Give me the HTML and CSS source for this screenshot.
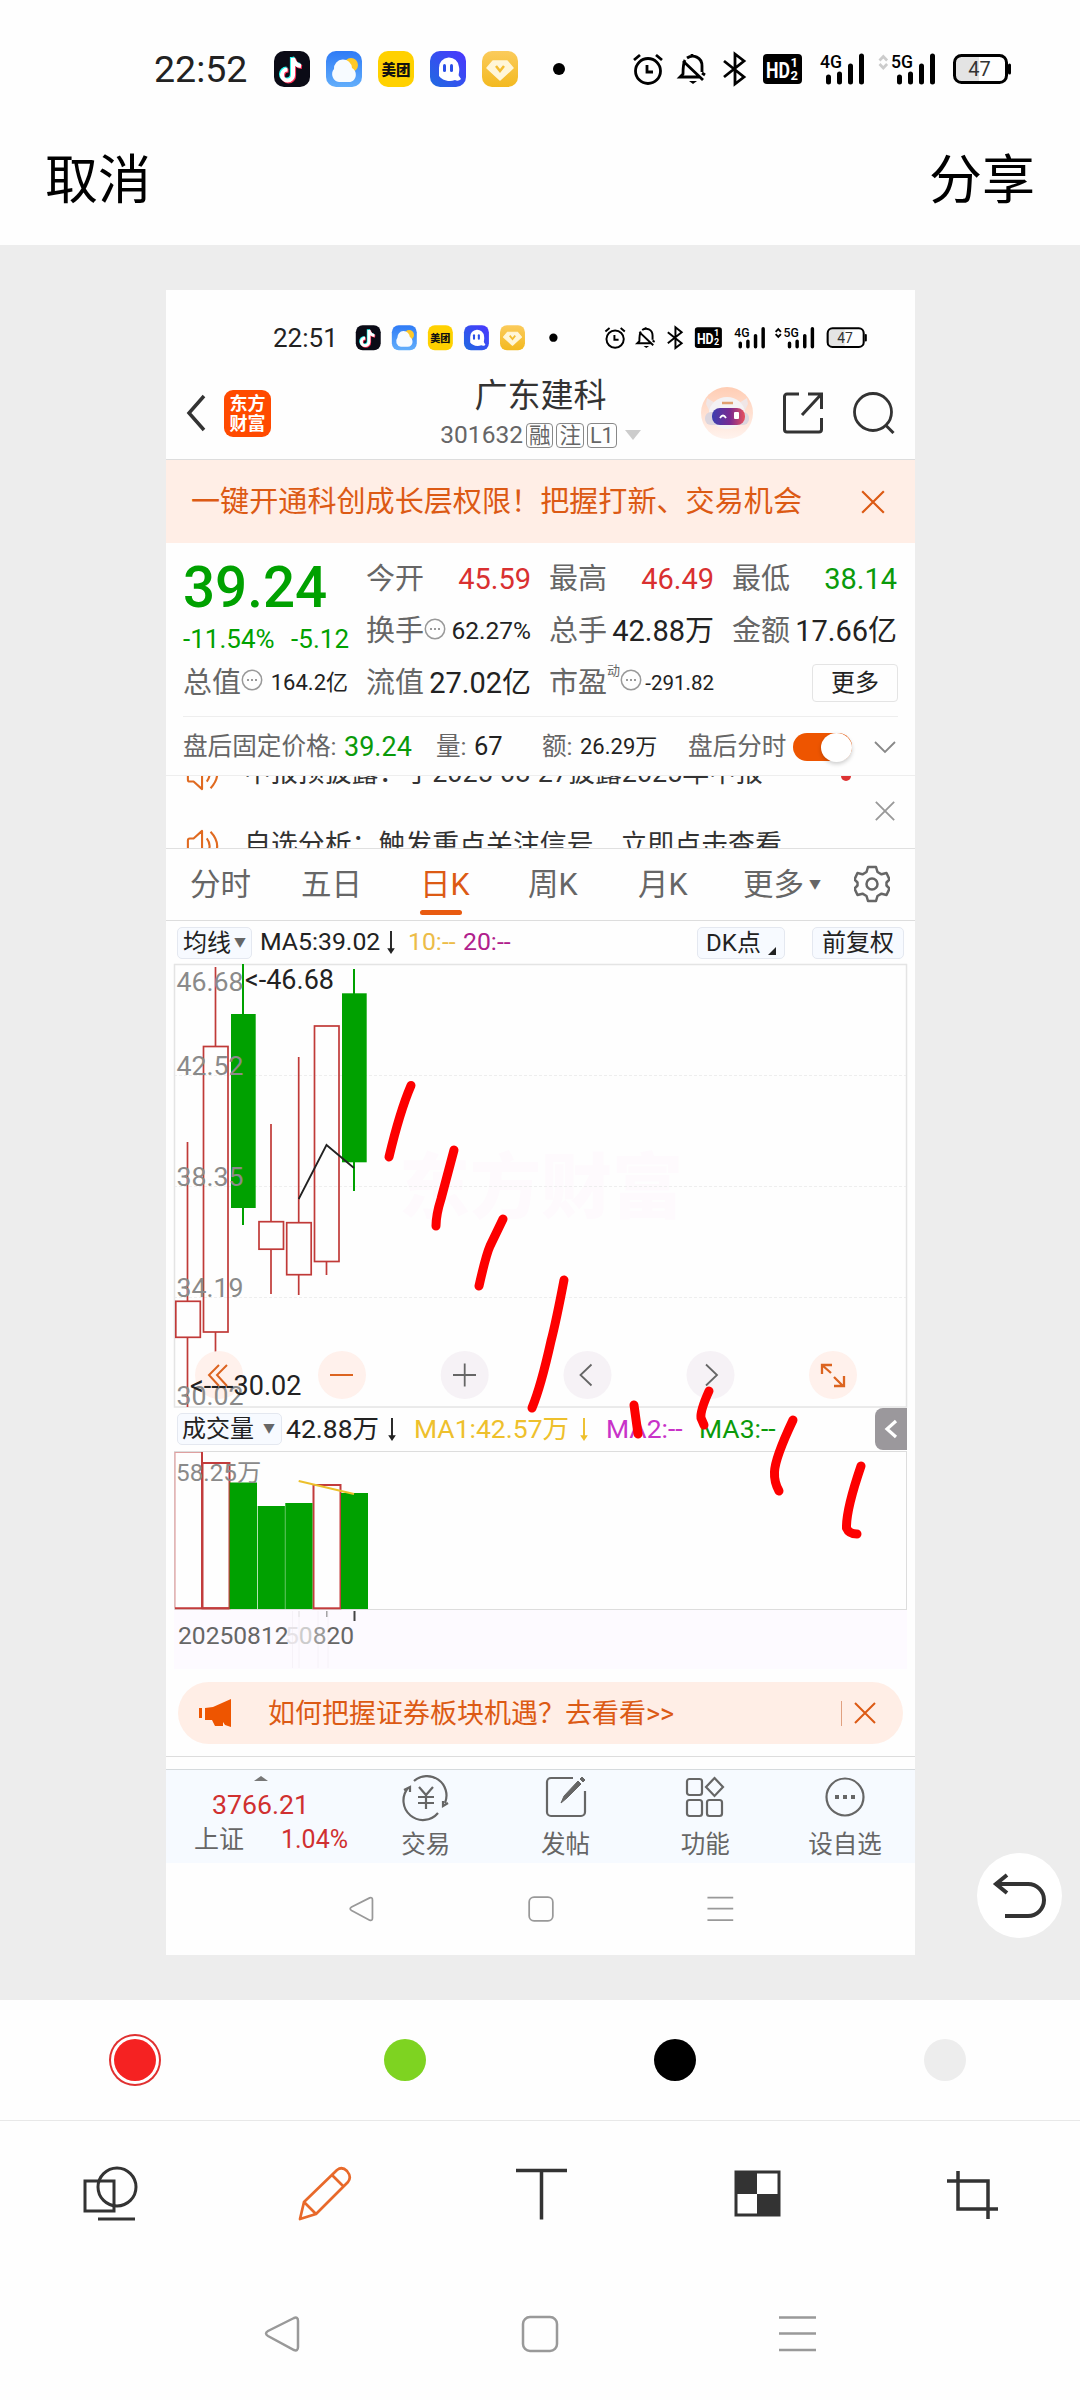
FILE: index.html
```html
<!DOCTYPE html>
<html lang="zh-CN">
<head>
    <meta charset="UTF-8">
    <meta name="viewport" content="width=device-width, initial-scale=1.0">
    <title>编辑截图</title>
    <link rel="stylesheet" href="styles.css">
</head>
<body>
    <!-- shared icons -->
    <svg class="defs">
        <defs>
            <linearGradient id="sky" x1="0" y1="0" x2="0" y2="1"><stop offset="0" stop-color="#2f7bf6"/><stop offset="1" stop-color="#62aefb"/></linearGradient>
            <linearGradient id="blue" x1="0" y1="1" x2="1" y2="0"><stop offset="0" stop-color="#1f6be0"/><stop offset="1" stop-color="#4b35ff"/></linearGradient>
            <linearGradient id="gold" x1="0" y1="0" x2="0" y2="1"><stop offset="0" stop-color="#fbcb5c"/><stop offset="1" stop-color="#f3b91f"/></linearGradient>
            <linearGradient id="visor"><stop offset="0" stop-color="#3b3fb0"/><stop offset=".55" stop-color="#7a2a90"/><stop offset="1" stop-color="#e8505c"/></linearGradient>
            <linearGradient id="peach" x1="0" y1="0" x2="0" y2="1"><stop offset="0" stop-color="#ffcdb4"/><stop offset="1" stop-color="#fff3ee"/></linearGradient>
        </defs>
        <symbol id="status-icons" viewBox="270 45 760 46">
            <rect x="274" y="51" width="36" height="36" rx="10" fill="#0b0b16"/>
            <g fill="none" stroke-width="4.2">
                <path d="M292 57v17a5.5 5.5 0 1 1-5.5-5.5M292 57c1 5 4 7.500 8 8" stroke="#25f4ee"/>
                <path d="M294 59v17a5.500 5.500 0 1 1-5.500-5.500M294 59c1 5 4 7.500 8 8" stroke="#fe2c55"/>
                <path d="M293 58v17a5.500 5.500 0 1 1-5.500-5.500M293 58c1 5 4 7.500 8 8" stroke="#fff"/>
            </g>
            <rect x="326" y="51" width="36" height="36" rx="10" fill="url(#sky)"/>
            <circle cx="351" cy="65" r="7" fill="#ffc928"/>
            <path d="M339 82a8 8 0 0 1-5-13 9 9 0 0 1 18-1c6 3 5 14-3 14z" fill="#f7fbff"/>
            <rect x="378" y="51" width="36" height="36" rx="10" fill="#ffd100"/>
            <text x="396" y="74.500" font-size="14.500" font-weight="900" text-anchor="middle" fill="#111">美团</text>
            <rect x="430" y="51" width="36" height="36" rx="10" fill="url(#blue)"/>
            <path d="M439 68a10 10 0 0 1 20-1c1 4-1 8 0 9l2 3c-2 2-4 2-6 1-7 3-14-1-16-4z" fill="#fff"/>
            <rect x="443" y="64" width="3" height="8" rx="1.500" fill="#2a50e8"/><rect x="450" y="64" width="3" height="8" rx="1.500" fill="#2a50e8"/>
            <rect x="482" y="51" width="36" height="36" rx="10" fill="url(#gold)"/>
            <path d="M493 61h14l6 7-13 12-13-12z" fill="#fff6d8" stroke="#fff6d8" stroke-width="1.500" stroke-linejoin="round"/>
            <path d="M496 66l4 5 4-5" fill="none" stroke="#f4bd30" stroke-width="2.500"/>
            <circle cx="559" cy="69" r="6"/>
            <g fill="none" stroke="#000" stroke-width="2.800">
                <circle cx="648" cy="71" r="12.500"/>
                <path d="M647 65v7h6M634 60l6-5M662 60l-6-5"/>
                <path d="M685 60c-2 4-2 9-2 14l-3 3h20M687 58c6-4 15-1 15 8v6M692 57v-3M683 61l20 19M702 73l3 2"/>
                <path d="M724 61l20 16-9 7V54l9 7-20 16"/>
            </g>
            <path d="M689 81h8l-4 3z"/>
            <rect x="763" y="54" width="39" height="30" rx="4"/>
            <text x="766" y="77.500" font-size="22" font-weight="700" fill="#fff" textLength="24" lengthAdjust="spacingAndGlyphs">HD</text>
            <text x="790.500" y="67" font-size="13" font-weight="700" fill="#fff">1</text>
            <text x="790.500" y="79.500" font-size="13" font-weight="700" fill="#fff">2</text>
            <text x="820" y="68" font-size="18" font-weight="500" textLength="22" lengthAdjust="spacingAndGlyphs">4G</text>
            <text x="891" y="68" font-size="18" font-weight="500" textLength="22" lengthAdjust="spacingAndGlyphs">5G</text>
            <path d="M828.500 77v5M839.500 74v8M850.500 66v16M861.500 56v26M899.500 77v5M910.500 74v8M921.500 66v16M932.500 56v26" stroke="#000" stroke-width="5" stroke-linecap="round"/>
            <path d="M879.500 60.500l3.800-4 3.800 4M879.500 64l3.800 4 3.800-4" fill="none" stroke="currentColor" stroke-width="2.700"/>
            <path d="M956 57h23v24h-19a5 5 0 0 1-5-5V60z" fill="#e4e4e4"/>
            <rect x="954.500" y="55.500" width="52" height="27" rx="7" fill="none" stroke="#000" stroke-width="3"/>
            <path d="M1009.500 65v8" stroke="#000" stroke-width="3" stroke-linecap="round"/>
            <text x="979.500" y="76" font-size="20" text-anchor="middle" fill="#333">47</text>
        </symbol>
        <symbol id="nav-icons" viewBox="260 2310 560 48">
            <g fill="none" stroke="#999" stroke-width="2.500">
                <path d="M294 2318l-26 13q-4 2.500 0 5l26 14q4 1.500 4-3v-26q0-4.500-4-3z"/>
                <rect x="523" y="2317" width="34" height="34" rx="7"/>
                <path d="M779 2317.500h37M779 2333.500h37M779 2350h37"/>
            </g>
        </symbol>
        <symbol id="arrow-down" viewBox="0 0 10 24"><path d="M5 0v22" stroke="currentColor" stroke-width="2"/><path d="M1 18h8l-4 6z" fill="currentColor"/></symbol>
        <symbol id="more-dots" viewBox="0 0 22 22"><circle cx="11" cy="11" r="9.700" fill="none" stroke="#999" stroke-width="1.500"/><path d="M6 11h2M10 11h2M14 11h2" stroke="#999" stroke-width="2"/></symbol>
        <symbol id="close" viewBox="0 0 24 24"><path d="M2 2l20 20M22 2L2 22" fill="none" stroke="currentColor" stroke-width="2"/></symbol>
        <symbol id="speaker" viewBox="0 0 36 36"><path d="M2 12q0-2 2-2h4l9-8v32l-9-8H4q-2 0-2-2zM22 10q6 8 0 16M26 3q14 15 0 30" fill="none" stroke="#e06a20" stroke-width="2.200" stroke-linejoin="round"/></symbol>
    </svg>

    <div class="status-bar">
        <span class="time">22:52</span>
        <svg class="status-icons"><use href="#status-icons"/></svg>
    </div>
    <div class="top-bar">
        <span>取消</span>
        <span>分享</span>
    </div>

    <main class="canvas">
        <div class="shot">
            <div class="status-bar small">
                <span class="time">22:51</span>
                <svg class="status-icons"><use href="#status-icons"/></svg>
            </div>

            <header class="stock-header">
                <div class="left">
                    <svg width="20" height="38" viewBox="0 0 20 38"><path d="M18 2L3 19l15 17" fill="none" stroke="#333" stroke-width="3.500"/></svg>
                    <div class="logo">东方<br>财富</div>
                </div>
                <div class="title">
                    <h1>广东建科</h1>
                    <p>301632<b>融</b><b>注</b><b>L1</b><i class="caret"></i></p>
                </div>
                <div class="right">
                    <svg width="52" height="52" viewBox="0 0 52 52">
                        <circle cx="26" cy="26" r="26" fill="url(#peach)"/>
                        <path d="M6 11l8 5h24l8-5 1 6-4 8H9l-4-8z" fill="#f0e6e6"/>
                        <ellipse cx="26" cy="26" rx="18" ry="16" fill="#f4f2f4"/>
                        <rect x="4" y="25" width="44" height="13" rx="6" fill="#dcd6de"/>
                        <rect x="11" y="21" width="33" height="17" rx="8" fill="url(#visor)"/>
                        <path d="M19 31q3-5 6 0" fill="none" stroke="#fff" stroke-width="1.800"/><rect x="33" y="25" width="5" height="7" rx="1" fill="#fff"/>
                        <path d="M21 16h11" stroke="#e0a070" stroke-width="2.500"/>
                    </svg>
                    <svg width="40" height="42" viewBox="0 0 40 42"><path d="M16 2H4a2.500 2.500 0 0 0-2.500 2.500v33A2.500 2.500 0 0 0 4 40h32a2.500 2.500 0 0 0 2.500-2.500V26M25 2h13.500v15M38 2.500L19 23" fill="none" stroke="#333" stroke-width="3"/></svg>
                    <svg width="42" height="42" viewBox="0 0 42 42"><circle cx="20" cy="20" r="18.500" fill="none" stroke="#333" stroke-width="2.800"/><path d="M32.500 33l8 8" stroke="#333" stroke-width="3"/></svg>
                </div>
            </header>

            <div class="banner">
                <span>一键开通科创成长层权限！把握打新、交易机会</span>
                <svg width="26" height="26"><use href="#close"/></svg>
            </div>

            <section class="quote">
                <div class="price">
                    <strong>39.24</strong>
                    <p><span>-11.54%</span><span>-5.12</span></p>
                </div>
                <div class="cell">今开<em class="up">45.59</em></div>
                <div class="cell">最高<em class="up">46.49</em></div>
                <div class="cell">最低<em class="down">38.14</em></div>
                <div class="cell">换手<svg class="dots"><use href="#more-dots"/></svg><em class="s24">62.27%</em></div>
                <div class="cell">总手<em>42.88万</em></div>
                <div class="cell">金额<em>17.66亿</em></div>
                <div class="cell">总值<svg class="dots"><use href="#more-dots"/></svg><em class="s22">164.2亿</em></div>
                <div class="cell">流值<em>27.02亿</em></div>
                <div class="cell">市盈<sup>动</sup><svg class="dots"><use href="#more-dots"/></svg><em class="s20">-291.82</em></div>
                <div class="cell"><button class="more">更多</button></div>
            </section>

            <div class="after-hours">
                <span>盘后固定价格:</span>
                <em class="down">39.24</em>
                <span>量:</span>
                <em class="vol">67</em>
                <span>额:</span>
                <em class="amount">26.29万</em>
                <span>盘后分时</span>
                <i class="switch"></i>
                <svg width="22" height="14" viewBox="0 0 22 14"><path d="M1 2l10 10L21 2" fill="none" stroke="#888" stroke-width="1.800"/></svg>
            </div>

            <div class="news">
                <ul>
                    <li><svg><use href="#speaker"/></svg>中报预披露：于2025-08-27披露2025年中报<i class="red-dot"></i></li>
                    <li><svg><use href="#speaker"/></svg>自选分析：触发重点关注信号，立即点击查看</li>
                </ul>
                <svg class="close" width="22" height="22"><use href="#close"/></svg>
            </div>

            <nav class="tabs">
                <a>分时</a>
                <a>五日</a>
                <a class="active">日K</a>
                <a>周K</a>
                <a>月K</a>
                <a>更多<small>▼</small></a>
                <svg width="36" height="38" viewBox="0 0 36 38"><path d="M14 2h8l1.500 5 4 2.300 5-1.300 3 6.500-3 3v3l3 3-3 6.500-5-1.300-4 2.300L22 36h-8l-1.500-5-4-2.300-5 1.300-3-6.500 3-3v-3l-3-3L3.500 8l5 1.300 4-2.300z" fill="none" stroke="#666" stroke-width="2.500" stroke-linejoin="round"/><circle cx="18" cy="19" r="5.500" fill="none" stroke="#666" stroke-width="2.500"/></svg>
            </nav>

            <div class="ma-row">
                <button>均线<small>▼</small></button>
                <span class="ma5">MA5:39.02</span>
                <svg class="arrow"><use href="#arrow-down"/></svg>
                <span class="ma10">10:--</span>
                <span class="ma20">20:--</span>
                <button class="dk">DK点<i></i></button>
                <button>前复权</button>
            </div>

            <!-- k-line chart, coordinates are screen pixels -->
            <svg class="kline" width="749" height="445" viewBox="166 963 749 445">
                <text x="399" y="1212" font-size="71" font-weight="900" fill="#fefafd">东方财富</text>
                <path d="M174 1075.500H907M174 1186.500H907M174 1297.500H907" stroke="#eee" stroke-dasharray="3 2"/>
                <rect x="174.500" y="964.500" width="732" height="442.500" fill="none" stroke="#e4e4e4" stroke-width="1.500"/>
                <g fill="none" stroke="#c03a38" stroke-width="1.700">
                    <path d="M187.500 1142v159M187.500 1337.500V1407M215.500 967v79M215.500 1332v21M271 1124v98M271 1249v45M298.700 1057v166M298.700 1275v20M326.500 1261.500V1275"/>
                    <rect x="175.800" y="1301.300" width="24.500" height="36"/>
                    <rect x="203.500" y="1046.500" width="24.500" height="285.500"/>
                    <rect x="259" y="1221.700" width="24.500" height="27.500"/>
                    <rect x="286.700" y="1222.700" width="24.500" height="52"/>
                    <rect x="314.500" y="1026" width="24.500" height="235.500"/>
                </g>
                <g fill="#00a100">
                    <rect x="231" y="1014" width="24.700" height="194"/><rect x="242" y="964" width="2" height="261"/>
                    <rect x="342" y="993.300" width="24.700" height="169"/><rect x="353" y="969" width="2" height="222"/>
                </g>
                <path d="M298.700 1199l27.800-54 27.500 23" fill="none" stroke="#222" stroke-width="1.800"/>
                <g>
                    <circle cx="219" cy="1375" r="24" fill="#fff1ec"/><circle cx="342" cy="1375" r="24" fill="#fff1ec"/><circle cx="833" cy="1375" r="24" fill="#fff1ec"/>
                    <circle cx="464.700" cy="1375" r="24" fill="#f6f2f6"/><circle cx="587.500" cy="1375" r="24" fill="#f6f2f6"/><circle cx="710.500" cy="1375" r="24" fill="#f6f2f6"/>
                </g>
                <g fill="none" stroke="#dc6420" stroke-width="2">
                    <path d="M219 1365l-10 10 10 11M227 1365l-10 10 10 11M330 1375h23"/>
                    <path d="M831 1373l-9-8M822 1374v-9h10M834 1377l9 9M844 1376v10h-10" stroke-width="2.300"/>
                </g>
                <path d="M453 1375h23M464.700 1363.500v23M591.500 1364.500l-11 10.500 11 10.500M706 1364.500l11 10.500-11 10.500" fill="none" stroke="#666" stroke-width="1.800"/>
                <g font-size="26.700" fill="#8a8a8a">
                    <text x="176.500" y="990.500">46.68</text>
                    <text x="176.500" y="1075">42.52</text>
                    <text x="176.500" y="1186">38.35</text>
                    <text x="176.500" y="1296.500">34.19</text>
                    <text x="176.500" y="1404.500">30.02</text>
                </g>
                <g font-size="27" fill="#222">
                    <text x="245" y="989">&lt;-46.68</text>
                    <text x="190" y="1395">&lt;----30.02</text>
                </g>
            </svg>

            <div class="vol-row">
                <button>成交量<small>▼</small></button>
                <span class="now">42.88万</span>
                <svg class="arrow"><use href="#arrow-down"/></svg>
                <span class="v1">MA1:42.57万</span>
                <svg class="arrow v1"><use href="#arrow-down"/></svg>
                <span class="v2">MA2:--</span>
                <span class="v3">MA3:--</span>
                <div class="drawer"><svg width="14" height="22" viewBox="0 0 14 22"><path d="M12 3L3 11l9 8" fill="none" stroke="#fff" stroke-width="3.200"/></svg></div>
            </div>

            <svg class="volume" width="749" height="220" viewBox="166 1449 749 220">
                <rect x="174" y="1609" width="733" height="60" fill="#fdfaff"/>
                <path d="M174 1451.500H907M174 1609.500H907M906.500 1451v158M174.500 1451v158" stroke="#ddd"/>
                <g fill="none" stroke="#c23c3c" stroke-width="2">
                    <path d="M175 1452v156.500M175 1452.500h27" stroke="#dfa0a0" stroke-width="1.200"/>
                    <path d="M202 1452v157M175 1608.300h54"/>
                    <rect x="202.500" y="1463" width="27" height="145.300"/>
                    <rect x="313.500" y="1485" width="27" height="123.300"/>
                </g>
                <g fill="#00a100">
                    <rect x="229.700" y="1482.500" width="27.300" height="126.500"/>
                    <rect x="257.700" y="1506" width="27.200" height="103"/>
                    <rect x="285.300" y="1503" width="27.200" height="106"/>
                    <rect x="341" y="1493" width="27" height="116"/>
                </g>
                <path d="M298.700 1481L354 1494" stroke="#ecc02c" stroke-width="2"/>
                <text x="176" y="1481" font-size="24.300" fill="#8a8a8a">58.25万</text>
                <path d="M299 1611v6" stroke="#ddd" stroke-width="1.500"/><path d="M327 1611v6" stroke="#888" stroke-width="1.500"/><path d="M354.500 1611v10" stroke="#444" stroke-width="2"/>
                <path d="M292.500 1611v57M299 1611v57M318 1611v57M328 1611v57" stroke="#f6f2f8"/>
                <g font-size="24.600" fill="#666">
                    <text x="178" y="1644">20250812</text>
                    <text x="285" y="1644"><tspan fill="#e6e2e6">5</tspan><tspan fill="#ccc">0</tspan><tspan fill="#999">8</tspan><tspan>20</tspan></text>
                </g>
            </svg>

            <div class="notice">
                <svg width="34" height="28" viewBox="0 0 34 28"><path d="M0 9h3v10H0zM6 9l8-1L32 0v28l-6-2-2-3v4h-8l-3-6H6z" fill="#ee5500"/></svg>
                <span>如何把握证券板块机遇？去看看&gt;&gt;</span>
                <i></i>
                <svg width="24" height="24"><use href="#close"/></svg>
            </div>
            <div class="divider"></div>

            <footer class="actions">
                <div class="index">
                    <i class="caret up"></i>
                    <b>3766.21</b>
                    <p><span>上证</span><b>1.04%</b></p>
                </div>
                <div class="action">
                    <svg viewBox="0 0 46 42"><path d="M11 5a19.500 19.500 0 0 1 31 22M45 27l-5 3v-5M35 37A19.500 19.500 0 0 1 5 12M1 14l6-3v5" fill="none"/><path d="M16 11l7 8 7-8M23 19v14M15 21h16M15 27h16" fill="none"/></svg>
                    交易
                </div>
                <div class="action">
                    <svg viewBox="0 0 46 42"><path d="M30 2H8a4 4 0 0 0-4 4v30a4 4 0 0 0 4 4h30a4 4 0 0 0 4-4V15" fill="none"/><path d="M18 27l3-7L35 5l3 3-14 14zM37 3l2-2 3 3-2 2z" fill="#666" stroke-width="1"/></svg>
                    发帖
                </div>
                <div class="action">
                    <svg viewBox="0 0 46 42"><g fill="none"><rect x="5" y="3" width="15" height="16" rx="2.500"/><rect x="5" y="24" width="15" height="16" rx="2.500"/><rect x="25" y="24" width="15" height="16" rx="2.500"/><path d="M32.500 2l8.500 9-8.500 9-8.500-9z"/></g></svg>
                    功能
                </div>
                <div class="action">
                    <svg viewBox="0 0 46 42"><circle cx="23" cy="21" r="18.500" fill="none"/><path d="M13 21h4M21 21h4M29 21h4" stroke-width="4"/></svg>
                    设自选
                </div>
            </footer>
            <svg class="nav-icons small"><use href="#nav-icons"/></svg>

            <!-- pen marks drawn on top of the screenshot -->
            <svg class="marks" viewBox="166 290 749 1665">
                <path d="M411 1085.500Q400 1111 389 1157"/>
                <path d="M454 1150L441 1199Q436 1215 436 1226"/>
                <path d="M503 1219L490 1246Q486 1255 479 1286"/>
                <path d="M564 1280Q556 1322 551 1341Q541 1386 532 1408"/>
                <path d="M634 1405L638 1434"/>
                <path d="M709 1391Q700 1411 701 1418L704 1425"/>
                <path d="M793 1420Q775 1458 774.500 1472Q774 1482 779 1491"/>
                <path d="M861 1466Q846 1510 846.500 1528Q849 1534 857 1534"/>
            </svg>
        </div>

        <button class="undo">
            <svg width="54" height="48" viewBox="0 0 54 48"><path d="M13 44h23a16 16 0 0 0 0-32H5M15 3L4 12l11 9" fill="none" stroke="#333" stroke-width="4"/></svg>
        </button>
    </main>

    <div class="palette">
        <i class="red"></i>
        <i class="green"></i>
        <i class="black"></i>
        <i class="grey"></i>
    </div>
    <div class="tools">
        <svg viewBox="0 0 56 56"><g fill="none" stroke="#333" stroke-width="3"><rect x="3" y="16" width="29" height="30"/><circle cx="35" cy="22" r="19"/><path d="M16 54h37"/></g></svg>
        <svg viewBox="0 0 56 56"><path d="M3 54l4-17L40 5q5-4 10 1 5 6 1 11L19 49zM7 37l12 12M35 10l11 11" fill="none" stroke="#e8692a" stroke-width="2.700" stroke-linejoin="round"/></svg>
        <svg viewBox="0 0 56 56"><path d="M3 5.500h51M28.500 5v49.500" fill="none" stroke="#333" stroke-width="3.500"/></svg>
        <svg viewBox="0 0 56 56"><rect x="7" y="7" width="43" height="43" fill="#fff" stroke="#333" stroke-width="3"/><path d="M6 6h22v23H6zM28 29h23v22H28z" fill="#333"/></svg>
        <svg viewBox="0 0 56 56"><path d="M14 6v38h40M3 16h41v38" fill="none" stroke="#333" stroke-width="3.500"/></svg>
    </div>
    <svg class="nav-icons"><use href="#nav-icons"/></svg>
</body>
</html>
```
FILE: styles.css
```css
* {
    box-sizing: border-box;
    margin: 0;
    padding: 0;
}

body {
    width: 1080px;
    height: 2400px;
    background: #fefefe;
    color: #222;
    font-family: Roboto, "Noto Sans CJK SC", sans-serif;
    line-height: 1;
    overflow: hidden;
}

svg { display: block; flex-shrink: 0; }
em, i { font-style: normal; }
span, em, a { white-space: nowrap; }

.defs {
    position: absolute;
    width: 0;
    height: 0;
}

button {
    font: inherit;
    color: inherit;
    border: none;
    background: none;
}

/* status bar */
.status-bar {
    display: flex;
    height: 136px;
    padding: 45px 0 0 154px;
    font-size: 37.5px;
}
.status-bar .time { width: 116px; line-height: 48px; }
.status-icons {
    width: 760px;
    height: 46px;
    color: #ccc;
}

.status-bar.small {
    height: 75px;
    padding: 31px 0 0 107px;
    font-size: 26px;
}
.status-bar.small .time { width: 80px; line-height: 34px; }
.small .status-icons {
    width: 527px;
    height: 32px;
    color: #000;
}

.top-bar {
    display: flex;
    justify-content: space-between;
    height: 109px;
    padding: 19px 45px 0;
    font-size: 53px;
    color: #000;
}

/* editing canvas */
.canvas {
    position: relative;
    height: 1755px;
    padding: 45px 0 0 166px;
    background: #ededed;
}
.shot {
    position: relative;
    width: 749px;
    height: 1665px;
    background: #fefefe;
}
.marks {
    position: absolute;
    inset: 0;
    width: 749px;
    height: 1665px;
    fill: none;
    stroke: #fd0000;
    stroke-width: 9;
    stroke-linecap: round;
    stroke-linejoin: round;
}
.undo {
    position: absolute;
    left: 977px;
    top: 1608px;
    width: 85px;
    height: 85px;
    padding-right: 1px;
    border-radius: 50%;
    background: #fff;
    display: flex;
    align-items: center;
    justify-content: center;
}

/* stock header */
.stock-header {
    display: grid;
    grid-template-columns: 1fr auto 1fr;
    align-items: center;
    height: 95px;
    padding-top: 2px;
    border-bottom: 1px solid #ddd;
}
.stock-header .left {
    display: flex;
    align-items: center;
    gap: 18px;
    padding-left: 20px;
}
.logo {
    width: 47px;
    height: 47px;
    padding-top: 4px;
    border-radius: 9px;
    background: #ff4a00;
    color: #fff;
    font-size: 18px;
    font-weight: 700;
    line-height: 20px;
    text-align: center;
}
.title { text-align: center; color: #333; }
.title h1 {
    font-size: 33px;
    font-weight: 400;
    margin-bottom: 11px;
}
.title p {
    display: flex;
    align-items: center;
    gap: 3px;
    font-size: 24.500px;
    color: #666;
}
.title b {
    height: 25px;
    padding: 0 2px;
    border: 1px solid #888;
    border-radius: 4px;
    font-size: 21.500px;
    font-weight: 400;
    line-height: 23px;
}
.caret {
    border: 8px solid transparent;
    border-top: 10px solid #ccc;
    border-bottom: 0;
    margin-left: 5px;
}
.stock-header .right {
    display: flex;
    justify-content: flex-end;
    align-items: center;
    gap: 30px;
    padding-right: 20px;
}

.banner {
    display: flex;
    align-items: center;
    justify-content: space-between;
    height: 83px;
    padding: 0 29px 0 25px;
    background: #ffeee6;
    color: #dc5a14;
    font-size: 29.100px;
}
.banner span { padding-top: 2px; }

/* quote numbers */
.quote {
    display: grid;
    grid-template-columns: repeat(4, 166px);
    grid-template-rows: 52px 52px 51px;
    column-gap: 17px;
    height: 174px;
    margin: 0 17px;
    padding-top: 10px;
    border-bottom: 1px solid #eee;
}
.price {
    grid-row: span 2;
    color: #00a100;
}
.price strong {
    display: block;
    padding-top: 7px;
    font-size: 56.500px;
    font-weight: 500;
    height: 73px;
}
.price p {
    display: flex;
    justify-content: space-between;
    font-size: 26px;
}
.cell {
    display: flex;
    align-items: center;
    padding-top: 1px;
    color: #666;
    font-size: 29px;
}
.cell em {
    margin: 0 1px 0 auto;
    color: #222;
}
.cell em.up { color: #d93030; }
.cell em.down, .after-hours em.down { color: #0a9a0a; }
.cell .s24 { font-size: 24.500px; }
.cell .s22 { font-size: 22px; }
.cell .s20 { font-size: 20.500px; }
.dots {
    width: 22px;
    height: 22px;
    margin: -6px 0 0 0;
}
.cell sup {
    font-size: 13px;
    margin: -26px 0 0 0;
}
.more {
    width: 86px;
    height: 38px;
    margin-left: auto;
    border: 1px solid #e4e4e4;
    border-radius: 4px;
    font-size: 24px;
    color: #222;
}

.after-hours {
    display: grid;
    grid-template-columns: 161px 92px 38px 68px 38px 108px 105px 81px auto;
    align-items: center;
    height: 59px;
    padding: 2px 0 0 17px;
    border-bottom: 1px solid #eee;
    color: #666;
    font-size: 24.600px;
}
.after-hours em { color: #222; }
.after-hours em.down { font-size: 27px; }
.after-hours .vol { font-size: 25.500px; }
.after-hours .amount { font-size: 22px; }
.switch {
    width: 59px;
    height: 28px;
    border-radius: 14px;
    background: #ee5500;
}
.switch::after {
    content: "";
    display: block;
    width: 31px;
    height: 29px;
    margin-left: 28px;
    border-radius: 50%;
    background: #fff;
    box-shadow: 0 2px 4px rgba(0, 0, 0, .2);
}

/* scrolling news, cut off at both ends */
.news {
    display: flex;
    align-items: center;
    height: 73px;
    border-bottom: 1px solid #e0e0e0;
    overflow: hidden;
    color: #999;
}
.news ul {
    width: 708px;
    margin-top: -5px;
    list-style: none;
    font-size: 26.900px;
    color: #333;
}
.news li {
    display: flex;
    align-items: center;
    height: 72px;
    padding-left: 19px;
    white-space: nowrap;
}
.news li svg {
    width: 36px;
    height: 34px;
    margin-right: 23px;
}
.red-dot {
    width: 10px;
    height: 10px;
    margin: 4px 0 0 78px;
    border-radius: 50%;
    background: #d33;
}
.news .close { margin-top: -2px; }

.tabs {
    display: grid;
    grid-template-columns: 111px 120px 107px 110px 105px 111px auto;
    align-items: center;
    height: 72px;
    padding-left: 24px;
    border-bottom: 1px solid #ddd;
    color: #666;
    font-size: 30.500px;
}
.tabs a {
    display: flex;
    align-items: center;
    gap: 5px;
    height: 60px;
    padding-bottom: 1px;
    margin-top: 2px;
}
.tabs svg { margin-top: -2px; }
.tabs small, .ma-row small, .vol-row small {
    color: #666;
    font-size: 12px;
}
.tabs .active {
    position: relative;
    left: -1px;
    color: #dc5a14;
}
.tabs .active::after {
    content: "";
    position: absolute;
    left: 0;
    bottom: 1px;
    width: 42px;
    height: 5px;
    border-radius: 3px;
    background: #e85a10;
}

.ma-row, .vol-row {
    display: flex;
    align-items: center;
    height: 42px;
    padding: 1px 0 0 11px;
    font-size: 24.800px;
}
.ma-row button, .vol-row button {
    display: flex;
    align-items: center;
    justify-content: center;
    gap: 3px;
    width: 75px;
    height: 32px;
    border: 1px solid #e4e8f0;
    border-radius: 5px;
    background: #f7faff;
    font-size: 24px;
}
.ma-row .dk {
    width: 88px;
    margin: 0 27px 0 auto;
}
.ma-row .dk + button { width: 92px; margin-right: 11px; }
.dk i {
    align-self: flex-end;
    margin: 0 0 3px 4px;
    border: 4.500px solid #222;
    border-top-color: transparent;
    border-left-color: transparent;
}
.arrow {
    width: 10px;
    height: 23px;
}
.ma5 { width: 134px; padding-left: 8px; }
.ma-row .arrow { margin-right: 12px; }
.ma10 { width: 55px; color: #ecbc48; }
.ma20 { width: 47px; color: #b0208c; }

.vol-row {
    height: 41px;
    font-size: 26.500px;
}
.vol-row button {
    width: 105px;
    gap: 9px;
    padding-right: 2px;
}
.vol-row .now { width: 105px; padding-left: 4px; }
.vol-row span.v1 { width: 165px; margin-left: 17px; }
.v1 { color: #eec02c; }
.v2 { width: 93px; margin-left: 17px; color: #c832c8; }
.v3 { color: #0a9a0a; }
.drawer {
    display: flex;
    align-items: center;
    justify-content: center;
    width: 32px;
    height: 42px;
    margin: 0 8px 0 auto;
    border-radius: 8px 0 0 8px;
    background: #9b989c;
}

.notice {
    display: flex;
    align-items: center;
    height: 62px;
    margin: 13px 12px 12px;
    padding: 0 26px 0 21px;
    border-radius: 31px;
    background: #ffeee6;
    color: #dc5a14;
    font-size: 27px;
}
.notice span { margin: 2px 0 0 35px; }
.notice i {
    width: 1px;
    height: 25px;
    margin: 0 11px 0 auto;
    background: #e0a080;
}
.divider {
    height: 14px;
    border-top: 1px solid #ddd;
    border-bottom: 1px solid #d5dadd;
}

/* bottom actions */
.actions {
    display: grid;
    grid-template-columns: 190px repeat(4, 139.700px);
    height: 93px;
    background: #f6faff;
    color: #666;
    font-size: 24.500px;
}
.index b {
    font-weight: 400;
    color: #d03030;
}
.index .caret {
    display: block;
    width: 0;
    margin: 6px 0 0 88px;
    border: 7px solid transparent;
    border-top: 0;
    border-bottom: 5px solid #777;
}
.index > b {
    display: block;
    padding: 11px 0 8px 46px;
    font-size: 26.700px;
}
.index p {
    display: flex;
    justify-content: space-between;
    padding: 0 8px 0 28px;
    font-size: 25px;
}
.action {
    display: flex;
    flex-direction: column;
    align-items: center;
    padding-top: 6px;
}
.action svg {
    width: 46px;
    height: 42px;
    margin-bottom: 15px;
    overflow: visible;
    stroke: #666;
    stroke-width: 2.200;
}

.nav-icons {
    width: 560px;
    height: 48px;
    margin: 90px 0 0 260px;
}
.nav-icons.small {
    width: 390px;
    height: 34px;
    margin: 29px 0 0 180px;
}

/* tools */
.palette {
    display: flex;
    justify-content: space-around;
    align-items: center;
    height: 121px;
    border-bottom: 1px solid #e8e8e8;
}
.palette i {
    width: 42px;
    height: 42px;
    border-radius: 50%;
}
.red {
    background: #f52222;
    box-shadow: 0 0 0 3px #fff, 0 0 0 5px #e03030;
}
.green { background: #7ed321; }
.black { background: #000; }
.grey { background: #ededed; }

.tools {
    display: flex;
    justify-content: space-around;
    height: 99px;
    padding: 44px 0 0 2px;
}
.tools svg {
    width: 56px;
    height: 56px;
}
```
